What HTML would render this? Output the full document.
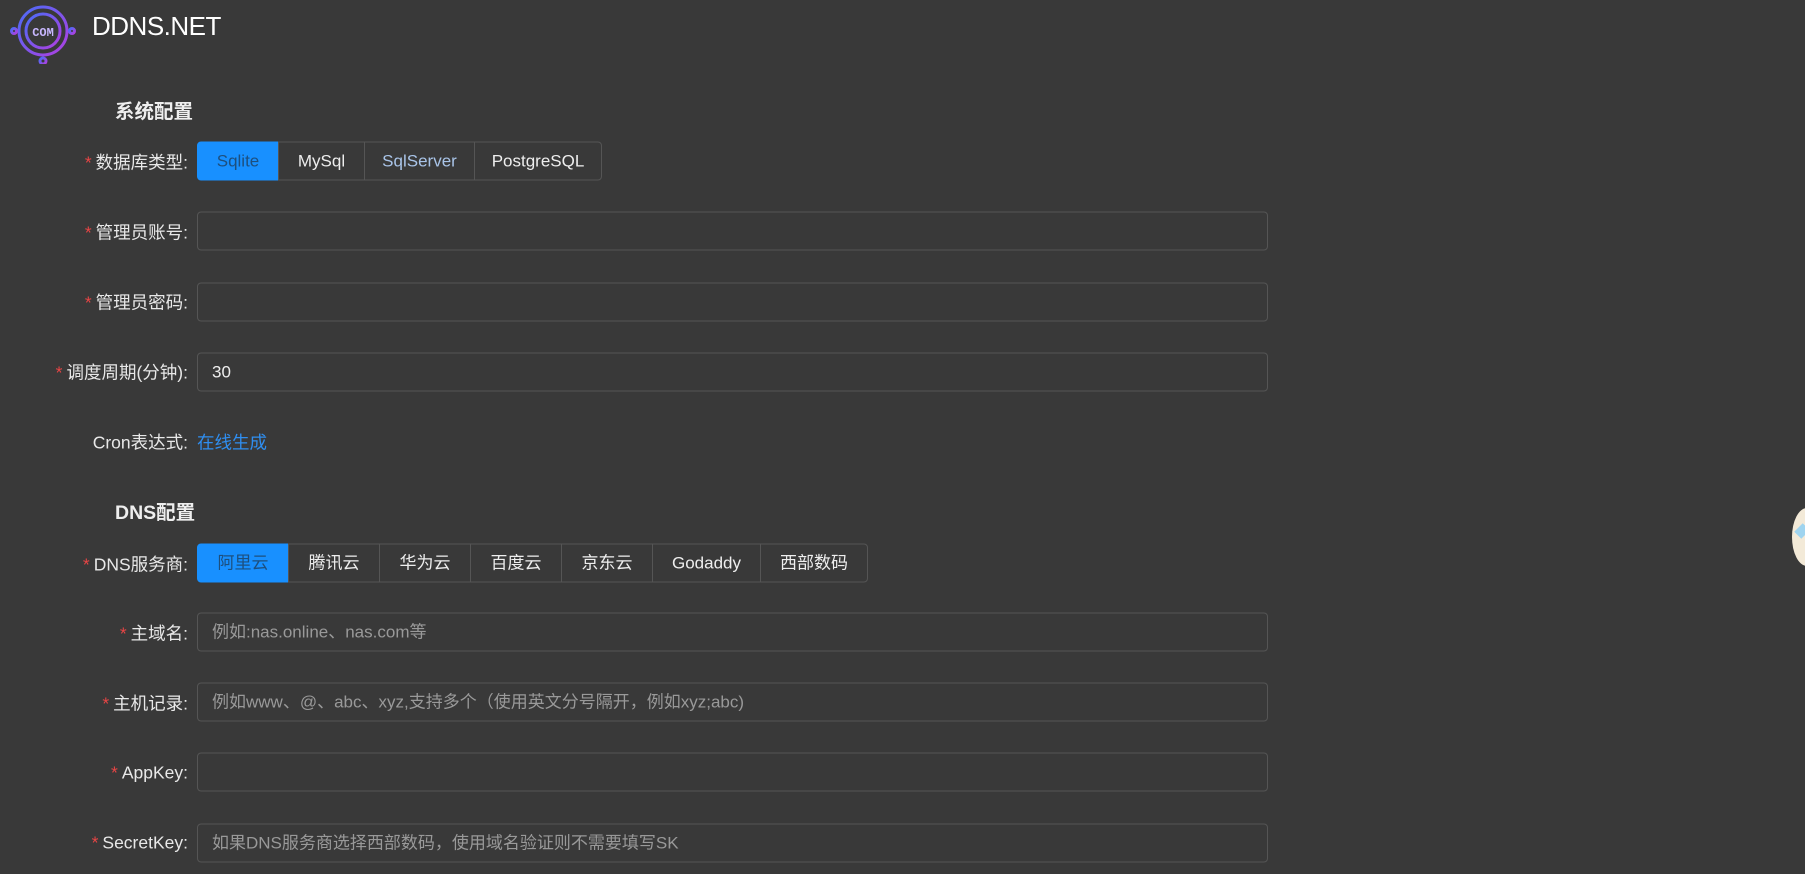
<!DOCTYPE html>
<html><head><meta charset="utf-8"><style>
body{margin:0;width:1805px;height:874px;background:#393939;overflow:hidden;font-family:"Liberation Sans","Noto Sans CJK SC",sans-serif;color:#e8e8e8;position:relative}
.abs{position:absolute}
.title{left:92px;top:11px;font-size:26px;color:#fff;letter-spacing:-0.5px}
.h{font-size:19.5px;font-weight:bold;color:#eee}
.lab{position:absolute;right:1617px;font-size:17.5px;color:#e8e8e8;white-space:nowrap;transform:translateY(-50%)}
.lab b{color:#e84545;font-weight:normal;margin-right:4px}
.inp{position:absolute;left:197px;width:1071px;height:39px;border:1px solid #555;border-radius:4px;background:#393939;transform:translateY(-50%);box-sizing:border-box;padding-left:14px;line-height:37px;font-size:17px;color:#999}
.grp{position:absolute;left:197px;display:flex;transform:translateY(-50%);height:39px}
.grp div{border:1px solid #555;margin-left:-1px;box-sizing:border-box;height:39px;line-height:37px;text-align:center;font-size:17px;color:#eee}
.grp div:first-child{margin-left:0;border-radius:4px 0 0 4px}
.grp div:last-child{border-radius:0 4px 4px 0}
.grp .on{background:#1890ff;border-color:#1890ff;color:#1d4f7e}
</style></head><body>
<svg class="abs" style="left:10px;top:0" width="66" height="64" viewBox="0 0 66 64">
<defs><linearGradient id="g" x1="0" y1="0" x2="1" y2="1"><stop offset="0" stop-color="#4a6cf7"/><stop offset="1" stop-color="#b03fe0"/></linearGradient></defs>
<g fill="none" stroke="url(#g)" stroke-width="3">
<circle cx="33" cy="31" r="24"/><circle cx="33" cy="31" r="17"/>
<line x1="33" y1="0" x2="33" y2="14"/><line x1="33" y1="48" x2="33" y2="60"/>
<line x1="3" y1="31" x2="16" y2="31"/><line x1="50" y1="31" x2="63" y2="31"/>
<circle cx="33" cy="61" r="3"/><circle cx="4" cy="31" r="2.5"/><circle cx="62" cy="31" r="2.5"/>
</g>
<text x="33" y="36" font-size="12" font-weight="bold" fill="#c9b8ff" text-anchor="middle" font-family="Liberation Mono,monospace">COM</text>
</svg>
<div class="abs title">DDNS.NET</div>
<div class="abs h" style="left:115px;top:95px">系统配置</div>
<div class="lab" style="top:162px"><b>*</b>数据库类型:</div>
<div class="grp" style="top:161px"><div class="on" style="width:82px">Sqlite</div><div style="width:87px">MySql</div><div style="width:111px;color:#a9c4e8">SqlServer</div><div style="width:128px">PostgreSQL</div></div>
<div class="lab" style="top:232px"><b>*</b>管理员账号:</div><div class="inp" style="top:231px"></div>
<div class="lab" style="top:302px"><b>*</b>管理员密码:</div><div class="inp" style="top:302px"></div>
<div class="lab" style="top:372px"><b>*</b>调度周期(分钟):</div><div class="inp" style="top:372px;color:#eee">30</div>
<div class="lab" style="top:442px">Cron表达式:</div>
<div class="abs" style="left:197px;top:442px;transform:translateY(-50%);font-size:17.5px;color:#2f8ef0">在线生成</div>
<div class="abs h" style="left:115px;top:496px">DNS配置</div>
<div class="lab" style="top:564px"><b>*</b>DNS服务商:</div>
<div class="grp" style="top:563px"><div class="on" style="width:92px">阿里云</div><div style="width:92px">腾讯云</div><div style="width:92px">华为云</div><div style="width:92px">百度云</div><div style="width:92px">京东云</div><div style="width:109px">Godaddy</div><div style="width:108px">西部数码</div></div>
<div class="lab" style="top:633px"><b>*</b>主域名:</div><div class="inp" style="top:632px">例如:nas.online、nas.com等</div>
<div class="lab" style="top:703px"><b>*</b>主机记录:</div><div class="inp" style="top:702px">例如www、@、abc、xyz,支持多个（使用英文分号隔开，例如xyz;abc)</div>
<div class="lab" style="top:773px"><b>*</b>AppKey:</div><div class="inp" style="top:772px"></div>
<div class="lab" style="top:843px"><b>*</b>SecretKey:</div><div class="inp" style="top:843px">如果DNS服务商选择西部数码，使用域名验证则不需要填写SK</div>
<div class="abs" style="left:1792px;top:508px;width:30px;height:58px;border-radius:50%;background:#f3ead8"></div>
<div class="abs" style="left:1797px;top:525px;width:10px;height:12px;background:#9fd4ef;transform:rotate(45deg)"></div>
</body></html>
